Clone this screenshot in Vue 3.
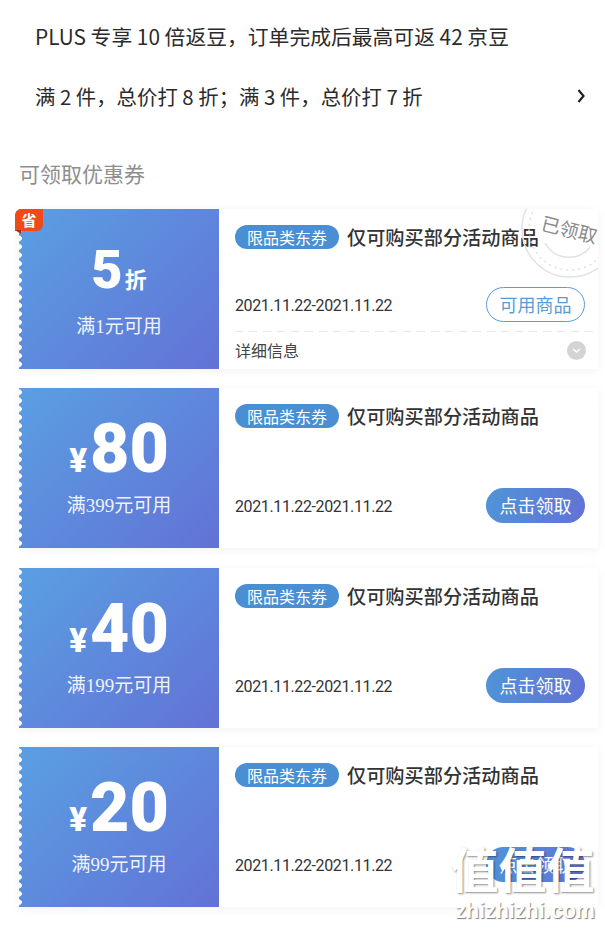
<script setup>
const quans = [
  { id: 1, tipo: "zhe", valor: "5", regra: "满1元可用", ganho: true },
  { id: 2, tipo: "yuan", valor: "80", regra: "满399元可用" },
  { id: 3, tipo: "yuan", valor: "40", regra: "满199元可用" },
  { id: 4, tipo: "yuan", valor: "20", regra: "满99元可用" },
];
</script>

<template>
  <div class="pagina">
    <p class="linha primeira">PLUS 专享 10 倍返豆，订单完成后最高可返 42 京豆</p>
    <div class="linha segunda">
      <span>满 2 件，总价打 8 折；满 3 件，总价打 7 折</span>
      <svg class="seta" width="9" height="14" viewBox="0 0 9 14">
        <path d="M1.5 1 L6.5 7 L1.5 13" fill="none" stroke="#222" stroke-width="2.2" />
      </svg>
    </div>
    <h2 class="titulo">可领取优惠券</h2>

    <ul class="lista">
      <li v-for="q in quans" :key="q.id" class="cartao">
        <div class="esquerda">
          <span v-if="q.ganho" class="sheng">省</span>
          <div class="preco" :class="q.tipo">
            <span v-if="q.tipo === 'yuan'" class="moeda">¥</span>
            <span class="valor">{{ q.valor }}</span>
            <span v-if="q.tipo === 'zhe'" class="zhe-txt">折</span>
          </div>
          <div class="regra">{{ q.regra }}</div>
        </div>
        <div class="direita">
          <div class="corpo" :class="{ curto: q.ganho }">
            <div class="topo">
              <span class="etiqueta">限品类东券</span>
              <span class="nome">仅可购买部分活动商品</span>
            </div>
            <div class="base">
              <span class="data">2021.11.22-2021.11.22</span>
              <span v-if="q.ganho" class="botao contorno">可用商品</span>
              <span v-else class="botao cheio">点击领取</span>
            </div>
          </div>
          <div v-if="q.ganho" class="detalhe">
            <span>详细信息</span>
            <svg width="19" height="19" viewBox="0 0 19 19">
              <circle cx="9.5" cy="9.5" r="9.5" fill="#d4d4d4" />
              <path d="M6 8 L9.5 11 L13 8" fill="none" stroke="#fff" stroke-width="1.6" />
            </svg>
          </div>
          <div v-if="q.ganho" class="carimbo">
            <svg width="90" height="70" viewBox="0 0 90 70">
              <circle cx="62" cy="20" r="48" fill="none" stroke="#dfe3e6" stroke-width="1.5" />
              <circle cx="62" cy="20" r="41" fill="none" stroke="#dfe3e6" stroke-width="1.5" stroke-dasharray="2 4" />
              <path d="M37 34 A27 27 0 0 0 82 38" fill="none" stroke="#dfe3e6" stroke-width="1.5" />
            </svg>
            <span class="carimbo-txt">已领取</span>
          </div>
        </div>
      </li>
    </ul>

    <div class="marca">
      <div class="marca-grande">值值值</div>
      <div class="marca-site">zhizhizhi.com</div>
    </div>
  </div>
</template>

<style>
html,
body {
  margin: 0;
  background: #fff;
}
</style>

<style scoped>
.pagina {
  position: relative;
  width: 605px;
  height: 929px;
  overflow: hidden;
  background: #fff;
  font-family: "Noto Sans CJK SC", "Noto Sans", sans-serif;
  color: #2b2b2b;
}

.linha {
  margin: 0;
  padding: 0 19px 0 35px;
  line-height: 30px;
  white-space: nowrap;
}

.primeira {
  padding-top: 21px;
  font-size: 20.8px;
}

.segunda {
  display: flex;
  justify-content: space-between;
  align-items: center;
  margin-top: 30px;
  font-size: 20.4px;
}

.titulo {
  margin: 47px 0 0 19px;
  font-size: 21px;
  line-height: 30px;
  font-weight: 400;
  color: #8e8e8e;
}

.lista {
  list-style: none;
  margin: 21px 0 0;
  padding: 0 7px 0 19px;
  display: flex;
  flex-direction: column;
  gap: 19.3px;
}

.cartao {
  display: flex;
  height: 160px;
  background: #fff;
  box-shadow: 0 2px 10px rgba(0, 0, 0, 0.05);
}

.esquerda {
  position: relative;
  flex: 0 0 200px;
  display: flex;
  flex-direction: column;
  align-items: center;
  background: linear-gradient(135deg, #5a9fe2, #6272d6);
  color: #fff;
}

.esquerda::before {
  content: "";
  position: absolute;
  left: 0;
  top: 0;
  bottom: 0;
  width: 4px;
  background: radial-gradient(circle at 0 50%, #fff 2.6px, transparent 3.1px) repeat-y;
  background-size: 4px 8.4px;
}

.sheng {
  position: absolute;
  left: -4px;
  top: 0;
  width: 28px;
  height: 22px;
  border-radius: 6px 0 6px 0;
  background: #ee4a1b;
  color: #fff;
  font-size: 15px;
  font-weight: 700;
  line-height: 21px;
  text-align: center;
}

.sheng::after {
  content: "";
  position: absolute;
  left: 0;
  top: 21px;
  width: 6px;
  height: 4px;
  background: #a8300f;
  clip-path: polygon(0 0, 100% 0, 100% 100%);
}

.preco {
  display: flex;
  align-items: baseline;
  height: 72px;
  margin-top: 25px;
  font-family: "Roboto", "Liberation Sans", sans-serif;
  font-weight: 900;
}

.valor {
  font-size: 68px;
  line-height: 72px;
}

.zhe .valor {
  font-size: 54px;
}

.moeda {
  font-size: 33px;
  margin-right: 3px;
}

.zhe-txt {
  font-family: "Noto Sans CJK SC", sans-serif;
  font-size: 22px;
  font-weight: 700;
  margin-left: 2px;
}

.regra {
  margin-top: 8px;
  font-family: "Liberation Serif", "Noto Sans CJK SC", serif;
  font-size: 19px;
  line-height: 26px;
  opacity: 0.9;
}

.direita {
  position: relative;
  flex: 1;
  display: flex;
  flex-direction: column;
  min-width: 0;
}

.corpo {
  box-sizing: border-box;
  display: flex;
  flex-direction: column;
  justify-content: space-between;
  height: 160px;
  padding: 16px 13px 25px 16px;
}

.corpo.curto {
  height: 122px;
  padding-bottom: 9px;
}

.topo {
  display: flex;
  align-items: center;
  gap: 8px;
}

.etiqueta {
  width: 104px;
  height: 24px;
  border-radius: 12px;
  background: #4a8fd3;
  color: #fff;
  font-size: 16px;
  line-height: 24px;
  text-align: center;
}

.nome {
  font-size: 19.2px;
  line-height: 24px;
  font-weight: 500;
  white-space: nowrap;
  color: #333;
}

.base {
  display: flex;
  justify-content: space-between;
  align-items: center;
}

.data {
  padding-top: 2px;
  font-family: "Roboto", sans-serif;
  font-size: 16px;
  letter-spacing: -0.38px;
  color: #333;
}

.botao {
  box-sizing: border-box;
  width: 99px;
  height: 35px;
  border-radius: 18px;
  font-size: 18px;
  line-height: 33px;
  text-align: center;
}

.contorno {
  border: 1px solid #5b9bd5;
  color: #5b9bd5;
}

.cheio {
  background: linear-gradient(100deg, #4f94d8, #6272d6);
  color: #fff;
  line-height: 35px;
}

.detalhe {
  flex: 1;
  display: flex;
  justify-content: space-between;
  align-items: center;
  margin-left: 16px;
  padding-right: 12px;
  background: repeating-linear-gradient(90deg, #e4e8ec 0 8px, transparent 8px 14px) top / 100% 1px no-repeat;
  font-size: 16px;
  color: #444;
}

.carimbo {
  position: absolute;
  right: 0;
  top: 0;
  width: 90px;
  height: 70px;
}

.carimbo-txt {
  position: absolute;
  left: 33px;
  top: 6px;
  font-size: 19px;
  line-height: 28px;
  color: #8a8a8a;
  transform: rotate(14deg);
  white-space: nowrap;
}

.marca {
  position: absolute;
  left: 450px;
  top: 840px;
  width: 145px;
  text-align: center;
  color: #fff;
}

.marca-grande {
  font-size: 48px;
  line-height: 54px;
  font-weight: 700;
  text-shadow: 1px 1px 2px rgba(0, 0, 0, 0.45);
  white-space: nowrap;
}

.marca-site {
  margin-top: 6px;
  padding-left: 5px;
  font-family: "Liberation Sans", sans-serif;
  font-size: 21.5px;
  line-height: 22px;
  font-weight: 700;
  text-shadow: 1px 1px 1px rgba(0, 0, 0, 0.5);
}
</style>
